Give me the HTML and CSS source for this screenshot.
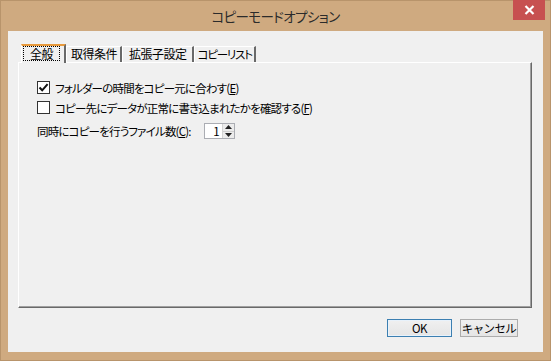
FILE: index.html
```html
<!DOCTYPE html>
<html lang="ja">
<head>
    <meta charset="UTF-8">
    <meta name="viewport" content="width=device-width, initial-scale=1.0">
    <title>コピーモードオプション</title>
    <link rel="stylesheet" href="styles.css">
</head>
<body>
    <!-- ダイアログ本体 -->
    <div class="window">
        <!-- タイトルバー -->
        <div class="titlebar">
            <span class="title">コピーモードオプション</span>
            <div class="close">
                <svg width="11" height="10" viewBox="0 0 11 10">
                    <path d="M1.5 1 L9.5 9 M9.5 1 L1.5 9" stroke="#fff" stroke-width="2.2" fill="none"/>
                </svg>
            </div>
        </div>

        <!-- クライアント領域 -->
        <div class="client">
            <!-- タブ -->
            <div class="tabs">
                <div class="tab active"><span class="focus">全般</span></div>
                <div class="tab">取得条件</div>
                <div class="tab">拡張子設定</div>
                <div class="tab">コピーリスト</div>
            </div>

            <!-- タブの中身 -->
            <div class="panel">
                <div class="check-row">
                    <span class="box">
                        <svg width="11" height="11" viewBox="0 0 11 11">
                            <path d="M1.5 5.5 L4.2 8.3 L9.6 2.2" stroke="#111" stroke-width="2" fill="none"/>
                        </svg>
                    </span>
                    <span>フォルダーの時間をコピー元に合わす(<u>E</u>)</span>
                </div>
                <div class="check-row">
                    <span class="box"></span>
                    <span>コピー先にデータが正常に書き込まれたかを確認する(<u>F</u>)</span>
                </div>
                <div class="spin-row">
                    <span>同時にコピーを行うファイル数(<u>C</u>):</span>
                    <div class="spin">
                        <span class="value">1</span>
                        <div class="arrows">
                            <div class="arrow"><svg width="7" height="4" viewBox="0 0 7 4"><path d="M0 4 L3.5 0 L7 4 Z" fill="#222"/></svg></div>
                            <div class="arrow"><svg width="7" height="4" viewBox="0 0 7 4"><path d="M0 0 L3.5 4 L7 0 Z" fill="#222"/></svg></div>
                        </div>
                    </div>
                </div>
            </div>

            <!-- ボタン -->
            <div class="buttons">
                <button class="btn default">OK</button>
                <button class="btn cancel">キャンセル</button>
            </div>
        </div>
    </div>
</body>
</html>
```

FILE: styles.css
```css
/* ダイアログ全体 */
body {
    margin: 0;
    font-family: "Noto Sans CJK JP", "Liberation Sans", sans-serif;
    font-size: 11.5px;
    letter-spacing: -0.8px;
    font-feature-settings: "palt";
    color: #000;
    background-color: #cda87e;
}

.window {
    box-sizing: border-box;
    width: 551px;
    height: 361px;
    border: 1px solid #b8946b;
    background-color: #cfaa80; /* 窓枠の色 */
    padding: 0 7px 8px 7px;
    display: flex;
    flex-direction: column;
}

/* タイトルバー */
.titlebar {
    height: 30px;
    display: flex;
    align-items: center;
    justify-content: center;
    position: relative;
}

.title {
    font-size: 13.5px;
    letter-spacing: -0.6px;
    color: #2b2b2b;
    margin-top: -1px;
}

.close {
    position: absolute; /* タイトルバーの右上に重ねる */
    top: -1px;
    right: -2px;
    width: 32px;
    height: 20px;
    background-color: #c75050;
    display: flex;
    align-items: center;
    justify-content: center;
}

/* クライアント領域 */
.client {
    flex-grow: 1;
    background-color: #f0f0f0;
    display: flex;
    flex-direction: column;
    padding-top: 13px;
}

/* タブ */
.tabs {
    display: flex;
    align-items: flex-end;
    height: 18px;
    margin-left: 13px;
}

.tab {
    box-sizing: border-box;
    height: 16px;
    padding: 0 3px 0 4px;
    border-top: 1px solid #fff;
    border-left: 1px solid #fff;
    border-right: 2px solid #696969;
    line-height: 14px;
    font-size: 12px;
    letter-spacing: -0.5px;
    white-space: nowrap;
}

.tab.active {
    height: 19px;
    margin-bottom: -1px;
    border-top: 2px solid #e89a3c; /* 選択中タブの上辺 */
    background-color: #f0f0f0;
    position: relative;
    z-index: 1;
    padding: 1px 1px 0 2px;
    width: 45px;
}

.focus {
    display: inline-block;
    outline: 1px dotted #000;
    padding: 0 6px;
    line-height: 13px;
}

.tab:nth-child(3) { padding: 0 5px 0 6px; }
.tab:nth-child(4) { padding: 0 2px 0 3px; font-size: 11.5px; letter-spacing: -1.2px; }

/* タブパネル */
.panel {
    box-sizing: border-box;
    height: 246px;
    margin: 0 11px 0 10px;
    border-top: 1px solid #fff;
    border-left: 1px solid #fff;
    border-right: 1px solid #696969;
    border-bottom: 1px solid #696969;
    box-shadow: inset -1px -1px 0 #a0a0a0;
    padding: 17px 0 0 18px;
    display: flex;
    flex-direction: column;
}

.check-row {
    display: flex;
    align-items: center;
    height: 15px;
    margin-bottom: 5px;
    white-space: nowrap;
}

.box {
    box-sizing: border-box;
    width: 13px;
    height: 13px;
    border: 1px solid #333;
    background-color: #fff;
    margin-right: 5px;
    display: flex;
    align-items: center;
    justify-content: center;
}

.spin-row {
    display: flex;
    align-items: center;
    margin-top: 3px;
    white-space: nowrap;
}

.spin {
    box-sizing: border-box;
    width: 31px;
    height: 16px;
    margin-left: 13px;
    border: 1px solid #abadb3;
    background-color: #fff;
    display: flex;
}

.spin .value {
    flex-grow: 1;
    text-align: right;
    padding-right: 3px;
    line-height: 14px;
}

.arrows {
    width: 11px;
    display: flex;
    flex-direction: column;
    border-left: 1px solid #d4d4d4;
}

.arrow {
    flex: 1;
    display: flex;
    align-items: center;
    justify-content: center;
    background-color: #ececec;
    border-bottom: 1px solid #cfcfcf;
}

.arrow:last-child {
    border-bottom: none;
}

/* ボタン */
.buttons {
    display: flex;
    justify-content: flex-end;
    gap: 8px;
    margin: 11px 25px 0 0;
}

.btn {
    box-sizing: border-box;
    height: 18px;
    padding: 0;
    font-family: inherit;
    font-size: 11.5px;
    letter-spacing: -0.6px;
    line-height: 16px;
    white-space: nowrap;
    color: #000;
    border: 1px solid #acacac;
    background: linear-gradient(#f0f0f0, #e5e5e5);
}

.btn.default {
    width: 65px;
    border-color: #3c7fb1;
    box-shadow: inset 0 0 0 1px #e8f2fb;
}

.btn.cancel {
    width: 58px;
}
```
